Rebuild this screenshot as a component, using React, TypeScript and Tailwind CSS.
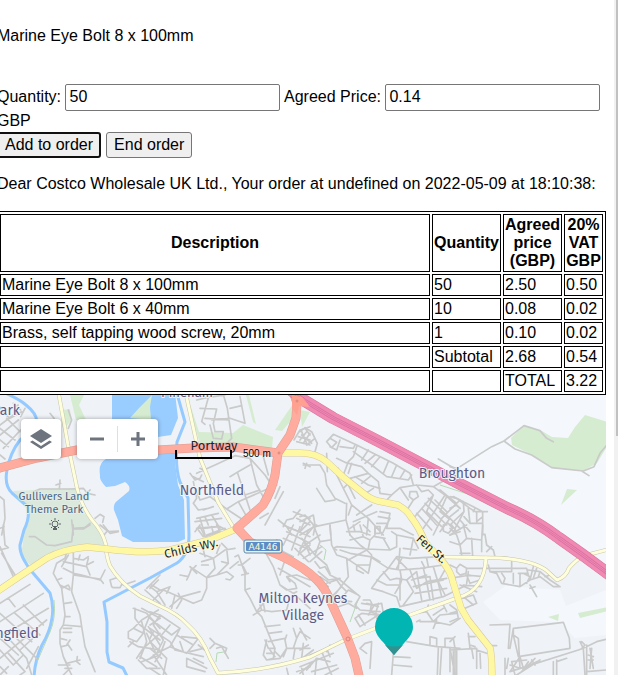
import React from "react";

type Tile = { x: number; y: number; d: string };

// Minor streets, one entry per map tile, drawn at three units per pixel.
const streets: Tile[] = [
  {
    x: 0,
    y: 385,
    d: `M0 75L30 100L65 80M0 120L40 90M0 150L55 105M10 190L62 135M0 130L45 165M20 100L60 140M0 210L15 222M25 75L55 60M0 165L25 185M40 55L62 75M75 70L62 95
    M100 320L120 312L215 312L250 310L262 325L285 330M178 312L180 285M168 300L182 295M262 325L270 315M205 75L215 105L205 130M150 85L162 100
    M0 335L12 345L15 400L5 450M0 430L12 425M215 405L220 450M220 432L250 432L270 415M285 400L300 388L312 395L308 412M300 420L325 440L355 438M320 440L312 450`,
  },
  {
    x: 150,
    y: 385,
    d: `M140 45L170 38L225 30M175 38L155 110L165 118M150 70L200 72L190 115L195 140M222 35L232 70L245 160M185 105L240 100L285 115L270 35M165 100L235 105M240 70L275 62M195 140L220 140L215 162L195 160M180 120L190 160M245 160L235 170
    M140 265L195 240L255 212M150 250L170 262M255 212L300 220L345 270L365 300M300 220L320 300M340 215L355 270M120 265L135 285L150 280L155 270M130 275L160 290M140 320L150 345L180 335L230 372L265 350L380 300M180 335L190 320M300 240L262 262L285 330L300 375M285 330L330 315M262 262L240 275M230 372L280 405M265 350L290 395M320 300L345 345
    M130 290L140 340L130 355L145 375L175 370M140 400L205 385M135 410L215 400M140 430L200 425M150 400L165 450M165 395L175 420M185 390L210 430M135 440L150 420M200 420L240 440M160 375L190 365M345 420L400 320M375 340L390 305M355 385L330 400
    M432 165L450 135L480 125M440 170L480 180M445 155L480 165M455 140L470 175M465 130L480 150M385 405L410 425L450 440M400 425L410 405L430 400L450 375M410 425L425 450M440 400L480 420M450 440L465 405M460 235L480 245M430 380L480 400`,
  },
  {
    x: 300,
    y: 385,
    d: `M0 140L15 128L35 140L52 175L45 200M0 165L20 140M10 175L30 145M20 180L45 160M5 150L35 175M80 170L100 148L170 180L280 235L330 265L340 300M80 170L95 188L110 172L90 160M120 165L110 195L90 185M120 185L160 190L165 180M170 185L160 215L145 230L130 270M160 200L215 240L260 275L325 285L335 270M185 225L205 195M195 235L225 210M215 245L240 215M250 265L265 230M275 275L290 240M300 280L315 255M110 220L135 232L185 245L205 265M155 235L145 265M150 280L205 265L235 290L240 325
    M115 250L110 270L130 310L155 360L205 400L250 450M165 275L205 300L240 310M185 295L210 275M190 330L220 310M10 240L60 240L75 265L80 300L105 340L135 355M20 235L15 250M50 310L75 350L105 345M115 270L145 300L165 340M130 310L150 290M80 205L82 260M140 355L138 405L45 425L15 390L0 395M45 425L40 450M0 410L40 390L45 420L20 450M90 420L92 450M0 440L30 410M138 405L150 450M155 360L145 390
    M240 325L275 330L300 308L350 300L400 305L435 330L480 370M275 330L260 345M300 308L325 345M330 320L350 320L355 335L340 345L328 335ZM350 300L365 320M340 345L315 385M365 320L385 315L400 330L340 400M385 340L450 400L420 440M375 355L440 420M400 330L380 380L425 425M350 385L395 435M365 370L410 420M435 330L390 400L370 430M480 345L425 400L400 450M405 345L440 380M450 400L480 430M420 315L470 355M440 335L420 380L445 400M430 420L445 415L458 430L445 445L430 438Z
    M170 390L215 360M160 410L230 380M205 400L200 450M240 380L270 385L260 430M235 395L265 400M230 415L260 415M225 425L240 425L240 445L225 445ZM190 420L210 440M260 430L300 430L340 450M270 400L245 450M150 430L180 410M415 222L480 260M400 305L435 285M460 335L480 345`,
  },
  {
    x: 450,
    y: 385,
    d: `M0 245L20 250M30 245L125 185L162 168L222 122L270 137L290 160L310 170M162 168L195 192L245 210L305 248L400 258L432 245L450 205L468 183M395 258L417 272
    M0 335L20 340L60 370L75 380L112 380M10 335L70 365L98 380L98 450M40 350L42 380L0 420M42 380L10 440M55 370L60 415L98 415M80 380L80 415M0 370L20 360M0 395L25 375M42 395L60 415M30 405L60 440M0 450L50 420M70 380L75 370M98 395L80 410M15 355L30 370M5 420L20 440`,
  },
  {
    x: 0,
    y: 525,
    d: `M10 0L15 60L25 68L0 75M0 65L40 155M5 85L45 150M0 235L90 178M0 290L130 205M10 330L145 250M0 400L140 285M0 265L95 350M25 220L45 245M70 240L130 300M45 265L120 330M0 340L55 390M50 340L110 400M25 385L75 440L60 450M0 375L40 420M60 375L110 330M80 430L115 365M40 420L70 390M0 425L20 445M30 345L80 400L95 450M0 450L25 425
    M88 35L105 35L140 60L165 62L215 50L220 0M220 10L255 8L270 0M310 0L330 25L355 20
    M200 82L195 100L170 115L160 145L185 190L195 270L190 300L180 315L180 355L190 395L205 430L215 450M220 85L220 150L215 200L240 270L245 305L255 365L285 440M190 110L260 125L270 150M220 100L250 105L265 95M235 105L240 90M265 100L260 120L280 110M190 130L220 145L245 150L300 165L315 135M220 150L300 162L310 175M205 90L185 125M170 165L185 160M180 180L210 195M185 190L205 180L210 190M195 235L215 232M195 275L210 275M190 300L245 305M190 310L215 310M190 322L215 322M180 340L200 345M185 365L205 360L215 375M200 360L210 345M190 395L200 415L240 405M175 420L210 420M230 410L232 395M230 410L240 418M195 430L215 430M190 450L205 435
    M335 185L330 165L350 158L370 170L360 188L340 188ZM370 180L405 168M375 180L390 195M440 190L480 150M435 195L480 235M455 180L480 195
    M400 250L440 265L480 310M425 250L480 280M405 250L405 280L420 300L480 345M385 320L400 310L430 325L410 350L385 340ZM400 310L425 285L475 255M390 350L415 365L480 375M425 290L440 350L420 400M410 400L430 370L480 325M415 405L440 430L480 430M425 410L480 390M440 325L465 380M400 350L385 365M445 305L480 360M450 270L430 320M420 395L470 425`,
  },
  {
    x: 150,
    y: 525,
    d: `M0 190L25 165M0 185L20 200L45 240M10 225L40 195L75 210L65 250M20 200L60 185L50 205M75 210L130 235L155 225L170 190L170 158L200 150L235 115L230 70L215 55M80 250L95 225L85 205M90 150L115 155L110 165M115 155L125 130L120 125L170 158M125 130L140 145M130 130L138 122M60 245L95 215L150 200M170 158L195 130L190 100L150 85M190 100L225 75L255 70M155 110L190 100M175 120L155 120M165 95L160 75M200 85L210 60M235 115L215 110M200 150L230 140L250 155L240 165L228 162M255 95L265 90L285 145L285 195L300 220L320 260L335 275L365 350L375 370M265 110L240 130M275 120L265 120M275 120L300 100M290 145L280 125M295 145L275 150M285 195L300 190M320 260L340 235M310 270L335 255L365 260L410 255L415 235M335 255L330 240M345 260L340 235M345 305L390 300M355 325L395 320M355 350L405 340
    M150 5L165 35L210 20M160 10L200 5M170 30L225 10M185 5L190 25M200 0L210 20M145 15L160 35
    M345 80L370 125L390 180L410 195L440 190L435 175L410 155L440 150M410 155L420 170M390 180L430 205L480 250M430 205L440 200M440 150L480 165M385 130L420 150L480 185M405 105L390 150
    M400 40L480 75M410 20L480 55M400 0L480 35M430 0L400 60M450 5L425 75M475 15L445 90M370 60L400 80L430 95M435 70L475 110M460 45L480 90M400 60L380 45
    M0 260L30 270L90 310L65 330L0 280M0 310L60 350L75 375L160 395M30 270L10 300L40 345L20 385L60 365L80 330L130 360L145 340L95 335M20 385L0 400M45 350L30 390L15 410M0 430L30 450M10 390L50 450M80 330L90 310M60 365L110 385L130 360M90 350L100 380M110 400L170 430M110 400L110 425L165 440M130 400L160 415M120 380L160 370M10 320L0 340M30 280L0 300M60 300L35 330M0 350L50 400L40 450M0 370L35 400M145 360L170 380M180 340L195 355L180 370M195 355L230 370L225 385M200 370L215 365L235 400
    M345 345L355 370L375 370L370 400L350 405L340 390L350 345M350 385L370 385M360 375L375 395M340 390L350 405L390 400L410 370L480 370M375 380L390 395M410 370L405 345L410 330M410 370L400 395M430 310L440 340L430 370M440 340L450 320L480 340M410 430L415 450M450 310L470 345M435 370L430 400M460 355L455 400M440 440L480 425M455 430L460 450`,
  },
  {
    x: 300,
    y: 525,
    d: `M0 30L50 0M0 70L60 30M40 0L60 50L45 90L80 120L90 145M5 40L45 90M0 85L30 60M10 100L65 65M30 110L65 80M60 50L90 45M90 0L95 60L110 90L140 100L145 155L100 215M110 75L100 70L110 65L200 72L270 75M140 100L185 130L205 145L210 120L170 120M170 120L170 135L190 145M120 75L150 85L210 95L265 130M145 105L200 75L215 90L210 120M215 95L240 110M150 30L180 60L200 75M150 45L190 35L180 0M140 20L180 20L210 30M160 0L165 20M190 35L210 45L225 30L225 5L240 15M210 45L205 70M225 35L255 40M270 75L290 65L290 30L340 40L355 70M250 40L270 75M290 30L275 20M310 70L350 75M340 40L330 90M300 70L295 130
    M45 110L60 130L75 125L90 150L120 165L180 215L165 240M55 140L85 165L120 160M60 155L90 175M65 170L85 185M80 175L110 165L125 185L100 210M105 215L120 225L155 230M120 225L145 195L175 210M115 245L145 235L170 250M125 185L140 200M165 240L180 255L240 260M165 280L185 265L230 270M165 280L180 305L235 270M175 270L195 300M185 235L215 240L245 235L250 265L230 280M190 225L210 225L220 245L205 270M200 235L235 245M215 235L210 260L240 270M235 235L225 275
    M265 130L290 95L330 100L420 95M265 130L240 155L215 190L250 200L290 215L300 245L365 230L430 215L460 200M250 140L270 165L290 160L320 165L340 200L310 240M230 165L260 180L300 180L305 165M300 180L285 205M270 130L300 135L360 130L430 120M300 135L305 165M290 100L320 130M320 165L350 140L365 225M330 135L350 190L380 170L440 160M350 160L390 155L400 225M370 130L380 170L390 225M400 125L415 175L425 215M340 185L430 165M345 205L440 190M440 125L415 170L435 210M365 110L375 130M305 100L290 130M380 100L385 125M300 225L300 160M335 165L380 150
    M345 265L380 260L400 290L450 300L480 280M360 290L400 290L420 270L470 265M400 270L430 250M430 240L440 260M360 285L350 290M410 285L400 310M380 260L385 240
    M320 350L410 365L480 370M280 385L275 450M280 395L330 398M280 420L335 425M415 370L412 450M425 370L420 450M390 360L390 335L410 340L410 365M435 340L435 365M435 340L460 340L465 370M465 370L465 450M450 375L450 440M180 370L195 355L215 350L210 430M180 370L200 385M0 375L25 360M0 405L40 375M20 435L50 400L90 410M0 445L40 410M30 390L80 370L90 395M35 440L110 420M45 450L50 400M65 380L95 450M90 360L80 380M0 425L100 385M75 450L115 430`,
  },
  {
    x: 450,
    y: 525,
    d: `M0 10L20 30L30 60L35 90M0 50L30 60L50 40L95 45L98 0M50 40L40 0M30 20L0 30M65 40L68 95M30 85L60 85M95 45L95 80M98 28L105 28L110 60L130 75L135 95M110 80L125 65
    M20 130L30 118L50 130L48 145L30 150L20 140ZM50 130L105 130M48 150L100 155M0 120L20 130M0 160L60 150M40 180L95 185M50 150L60 175L90 165M30 180L80 200M55 140L50 175M10 200L50 180
    M0 240L20 255L25 280L0 290M20 225L70 210L80 235L45 250M40 215L70 240M0 265L20 260
    M115 120L120 140L185 140L185 110M110 130L230 130L235 150M120 140L140 145L155 175L210 185L240 165L270 155L310 185L330 185M155 145L165 160L160 175M190 145L190 175M210 145L210 185M220 145L240 155L230 175M235 135L270 140L300 165L330 185M250 125L240 165M260 130L250 160M240 180L260 215M240 190L255 185M270 140L265 155M285 155L300 150M205 145L230 145
    M120 300L180 298L175 370M190 310L340 292L358 340L360 370L205 395L190 330ZM190 310L180 370M190 330L205 340L210 430L180 420M165 400L165 450M175 400L170 430M180 440L385 375L400 370L440 350L468 343M185 410L230 405M180 440L210 395L220 430M200 450L270 405M225 430L255 400M215 440L235 410M230 425L260 410M185 410L195 450M245 405L255 420M310 410L310 450M320 405L320 450M320 410L350 400M390 350L400 370L405 450M395 350L405 360L395 370M410 360L410 450M420 370L430 430M425 370L420 430M415 390L430 395M415 405L430 405M410 440L468 435
    M0 350L15 335M0 375L80 370L80 430M10 375L10 450M20 375L20 450M55 325L60 370M55 335L75 335M65 370L70 400M90 385L92 430M80 375L110 385M0 370L15 450M60 360L75 365M125 362L140 362`,
  },
];

const primary = [
  "M-10 471L0 468L37 458L77 450Q120 448 158 450L193 448L233 447L278 453",
  "M292 388L297 403L296 418L290 435L278 453L275 475Q272 490 263 505L237 528L250 542L283 557Q304 567 317 580Q325 588 330 600L347 637L355 658L360 680",
];
const yellow = [
  "M283 453L300 453Q317 453 327 462L343 477L363 493Q370 499 378 501L398 505Q407 510 411 517Q419 527 425 542L443 562Q451 572 453 582L461 608L468 620L490 648Q492 655 492 680",
  "M-5 593L20 576L47 558Q64 549 87 547L107 549Q145 554 170 550L210 540L236 529",
];
const pale = [
  "M58 390L68 445L77 488Q81 505 92 520Q103 532 106 545Q106 556 110 566Q120 583 140 596L160 606Q178 614 187 624Q202 637 210 658L218 673Q265 671 310 657L345 640L410 615L457 598Q472 594 479 583Q485 574 486 558",
  "M185 390L200 458L218 502L235 530",
  "M443 557L500 558Q532 560 546 570L557 580Q566 577 569 568Q576 560 583 556L610 549",
];
const motorway =
  "M282 383L305 401L333 418L380 442L460 484L507 508Q535 520 559 538L583 555L614 578";
const water = [
  "M-2 390Q18 398 26 405Q40 416 36 427L20 440Q10 453 7 470Q4 485 12 493L28 507Q30 518 24 530L20 545Q19 556 33 573L50 593Q54 605 52 618Q50 632 42 645Q34 662 34 680",
  "M176 390L185 422L177 442Q175 468 180 482L188 498L189 535Q189 555 177 563L150 578L104 602L107 622L107 652L109 662L123 668L129 680",
];

function Road({ paths, casing, fill, width }: { paths: string[]; casing: string; fill: string; width: number }) {
  return (
    <g fill="none" strokeLinejoin="round" strokeLinecap="round">
      {paths.map((d) => (
        <path key={d} d={d} stroke={casing} strokeWidth={width + 1} />
      ))}
      {paths.map((d) => (
        <path key={d} d={d} stroke={fill} strokeWidth={width} />
      ))}
    </g>
  );
}

function MapDrawing() {
  return (
    <svg
      className="block h-full w-full"
      viewBox="-3 395 609 280"
      preserveAspectRatio="xMidYMid slice"
      role="img"
      aria-label="Map"
    >
      <rect x="-3" y="395" width="609" height="280" fill="#eff3f7" />
      <path d="M295 390L610 390L610 575L583 555L540 526L460 484L333 418Z" fill="#f4f8fc" />
      <path d="M483 602L507 585L530 588L560 590L566 606L606 590L606 635L575 638L560 622L500 620Z" fill="#f4f8fc" />
      <g fill="#d5ecd0">
        <path d="M524 425L542 431L552 437L568 438L575 427L585 415L608 422L608 445L597 463L583 471L553 468L532 455L512 445L511 438Z" />
        <path d="M567 489L577 490L561 505Z" />
        <path d="M548 617L559 614L558 621Z" />
        <path d="M578 613L608 607L608 611L580 618Z" />
        <path d="M70 395L84 395L79 405L86 420L76 420Z" />
        <path d="M63 410L70 409L71 420L66 427Z" />
        <path d="M186 395L192 410L199 432L233 433L243 425L273 437L272 448L237 444L200 444Z" />
        <path d="M293 404L296 415L282 431L275 430Z" />
        <path d="M300 410L310 412L302 427Z" />
        <path d="M246 395L249 395L256 424L253 422Z" />
      </g>
      <path d="M13 491L77 488L80 508L100 532L104 545L83 546L63 550L33 568L21 555L25 530L28 507Z" fill="#dbe9dc" />
      <path
        d="M112 393L175 393L178 418L171 435L158 437L158 446L176 446L175 463L178 485L184 500L185 539L178 542L133 542L122 536L118 520L114 510Q113 504 117 501L129 491Q131 486 125 482L115 486L106 487Q99 480 100 475Q98 463 106 459L112 457Z"
        fill="#99ccff"
      />
      <path d="M130 418L140 407L152 395L150 407L151 420Z" fill="#d5ecd0" />
      <g fill="none" stroke="#94caff" strokeWidth="3" strokeLinejoin="round">
        {water.map((d) => (
          <path key={d} d={d} />
        ))}
      </g>
      <g fill="none" stroke="#b5d9b5" strokeWidth="1">
        <path d="M54 600Q56 618 50 632L37 662" />
        <path d="M440 485L480 498L530 521L570 548" />
        <path d="M320 545L326 550L324 560M358 600L350 622M216 662L217 653L224 652" />
      </g>
      {streets.map((t) => (
        <path
          key={t.x + "-" + t.y}
          d={t.d}
          transform={`translate(${t.x} ${t.y}) scale(0.33333)`}
          fill="none"
          stroke="#c9cac9"
          strokeWidth="5"
          strokeLinejoin="round"
          strokeLinecap="round"
        />
      ))}
      <Road paths={pale} casing="#c9c6a8" fill="#fffedc" width={3} />
      <Road paths={yellow} casing="#d9c79c" fill="#fff8a2" width={6} />
      <Road paths={primary} casing="#dd9f98" fill="#ffab9d" width={8} />
      <g fill="none" strokeLinejoin="round">
        <path d={motorway} stroke="#d9769f" strokeWidth="12" />
        <path d={motorway} stroke="#f08ab2" strokeWidth="11" />
        <path d={motorway} stroke="#d870a2" strokeWidth="4" />
        <path d={motorway} stroke="#f08ab2" strokeWidth="2.5" />
        <path d={motorway} stroke="#d870a2" strokeWidth="0.8" />
      </g>
      <path d="M292 395L302 397L310 407L299 406L297 415L292 408Z" fill="#ffa091" />
      <g fill="none" stroke="#d9857c">
        <circle cx="279" cy="453" r="1" />
        <circle cx="348" cy="639" r="2" />
        <circle cx="297" cy="401" r="1" />
      </g>

      <g
        className="font-['Fira_Sans','Noto_Sans',sans-serif]"
        fill="#5b5b87"
        stroke="#f1f4f8"
        strokeWidth="2"
        strokeLinejoin="round"
        paintOrder="stroke"
        fontSize="14"
      >
        <g textAnchor="middle">
          <text x="187" y="397" fontSize="13">Pineham</text>
          <text x="212" y="495">Northfield</text>
          <text x="452" y="478">Broughton</text>
          <text x="303" y="603">Milton Keynes</text>
          <text x="303" y="620">Village</text>
        </g>
        <g textAnchor="end">
          <text x="20" y="415">Park</text>
          <text x="39" y="638">Springfield</text>
        </g>
        <g textAnchor="middle" fontSize="11" fill="#4b6585" stroke="#e3ede6">
          <text x="54" y="500">Gullivers Land</text>
          <text x="54" y="513">Theme Park</text>
        </g>
        <g fill="#1d2533" fontSize="12" textAnchor="middle">
          <text x="214" y="450" fontSize="13" stroke="none">Portway</text>
          <text stroke="#fff8c8" transform="translate(192 552) rotate(-13)">Childs Wy.</text>
          <text stroke="#fff8c8" transform="translate(429 552) rotate(42)">Fen St.</text>
        </g>
      </g>

      <g fill="none" stroke="#5c6468">
        <circle cx="55" cy="524" r="3" />
        <path d="M49 524h2M59 524h2M55 518v2M51 520l1 1M59 520l-1 1M51 528l1 -1M59 528l-1 -1" />
        <path d="M53 529h4M55 526v3" strokeWidth="2" />
      </g>

      <rect x="244" y="540" width="38" height="13" rx="2" fill="#f4f0d2" stroke="#5b89bd" />
      <rect x="246" y="542" width="34" height="9" rx="1" fill="#5a8dc8" />
      <text className="font-['DejaVu_Sans',sans-serif]" x="263" y="550" fontSize="9" textAnchor="middle" fill="#fffbd0">
        A4146
      </text>

      <path d="M394 608a19 19 0 0 1 19 19c0 6-4 11-8 15l-11 13l-11-13c-4-4-8-9-8-15a19 19 0 0 1 19-19Z" fill="#00b5b2" />
      <path d="M385 645Q394 648 403 645L394 655Z" fill="#339190" />
    </svg>
  );
}

const rows = [
  ["Marine Eye Bolt 8 x 100mm", "50", "2.50", "0.50"],
  ["Marine Eye Bolt 6 x 40mm", "10", "0.08", "0.02"],
  ["Brass, self tapping wood screw, 20mm", "1", "0.10", "0.02"],
  ["", "Subtotal", "2.68", "0.54"],
  ["", "", "TOTAL", "3.22"],
];

export default function App() {
  return (
    <div className="flex min-h-screen overflow-hidden bg-white font-['Liberation_Sans',Arial,sans-serif] text-[16px] leading-[18px] text-black">
      <main className="-ml-[3px] min-w-0 flex-1 pt-[27px] pr-2">
        <p className="mb-[39px]">Marine Eye Bolt 8 x 100mm</p>

        <form onSubmit={(e) => e.preventDefault()}>
          <div className="mb-0.5">
            <label htmlFor="quantity">Quantity:</label>{" "}
            <input
              id="quantity"
              defaultValue="50"
              className="mb-px h-[27px] w-[215px] rounded-[2px] border border-[#767676] bg-white px-[3px] pb-0.5"
            />{" "}
            <label htmlFor="price">Agreed Price:</label>{" "}
            <input
              id="price"
              defaultValue="0.14"
              className="mb-px h-[27px] w-[215px] rounded-[2px] border border-[#767676] bg-white px-[3px] pb-0.5"
            />{" "}
            GBP
          </div>
          <div className="flex gap-[5px]">
            <button type="submit" className="h-[26px] rounded-[3px] border-2 border-[#101010] bg-[#efefef] px-1.5">
              Add to order
            </button>
            <button type="button" className="h-[26px] rounded-[3px] border border-[#767676] bg-[#efefef] px-[7px]">
              End order
            </button>
          </div>
        </form>

        <p className="mt-[17px] mb-[18px]">
          Dear Costco Wholesale UK Ltd., Your order at undefined on 2022-05-09 at 18:10:38:
        </p>

        <table className="w-full table-fixed border-separate border-spacing-[2px] border border-black">
          <colgroup>
            <col />
            <col className="w-[69px]" />
            <col className="w-[59px]" />
            <col className="w-[39px]" />
          </colgroup>
          <thead>
            <tr>
              {["Description", "Quantity", "Agreed price (GBP)", "20% VAT GBP"].map((h) => (
                <th key={h} className="border border-black p-px text-center font-bold">
                  {h}
                </th>
              ))}
            </tr>
          </thead>
          <tbody>
            {rows.map((row, i) => (
              <tr key={i} className="h-[22px]">
                {row.map((cell, j) => (
                  <td key={j} className="border border-black p-px">
                    {cell}
                  </td>
                ))}
              </tr>
            ))}
          </tbody>
        </table>

        <section className="relative h-[280px] overflow-hidden">
          <MapDrawing />
          <div className="absolute top-6 left-6 flex gap-4 text-[#6d747e]">
            <button
              type="button"
              aria-label="Map layers"
              className="flex size-10 items-center justify-center rounded bg-white shadow-[0_0_4px_rgba(0,0,0,0.35)]"
            >
              <svg viewBox="0 0 24 24" className="size-6" fill="currentColor">
                <path d="M12 2L23 9L12 16L1 9Z" />
                <path d="M1 15L3.500 13.500L12 19L20.500 13.500L23 15L12 22Z" />
              </svg>
            </button>
            <div className="flex h-10 items-center rounded bg-white shadow-[0_0_4px_rgba(0,0,0,0.35)]">
              <button type="button" aria-label="Zoom out" className="flex size-10 items-center justify-center">
                <svg viewBox="0 0 14 14" className="size-[14px]" fill="currentColor">
                  <path d="M0 5.500h14v3H0Z" />
                </svg>
              </button>
              <span className="h-[26px] w-px bg-[#dddfe2]" />
              <button type="button" aria-label="Zoom in" className="flex size-10 items-center justify-center">
                <svg viewBox="0 0 14 14" className="size-[14px]" fill="currentColor">
                  <path d="M0 5.500h5.500V0h3v5.500H14v3H8.500V14h-3V8.500H0Z" />
                </svg>
              </button>
            </div>
          </div>
          <div className="absolute top-[55px] left-[178px] flex items-start gap-[11px]">
            <span className="h-[9px] w-[57px] border-2 border-t-0 border-black" />
            <span className="text-[10px] leading-[8px] [text-shadow:0_0_2px_white]">500 m</span>
          </div>
        </section>
      </main>

      <div aria-hidden="true" className="flex w-1 shrink-0 flex-col bg-[#f1f1f1] pl-0.5">
        <div className="h-[436px] bg-[#c1c1c1]" />
      </div>
    </div>
  );
}
